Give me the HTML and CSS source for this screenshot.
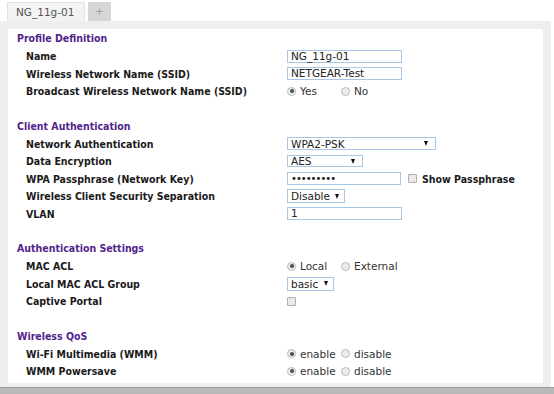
FILE: index.html
```html
<!DOCTYPE html>
<html>
<head>
<meta charset="utf-8">
<link rel="stylesheet" href="styles.css">
</head>
<body>
<div class="tabs">
  <div class="tab active">NG_11g-01</div>
  <div class="tab add">+</div>
</div>
<div class="frame">
  <div class="panel">
    <div class="section">
      <div class="head">Profile Definition</div>
      <div class="row"><div class="label">Name</div><div class="value"><span class="field">NG_11g-01</span></div></div>
      <div class="row"><div class="label">Wireless Network Name (SSID)</div><div class="value"><span class="field">NETGEAR-Test</span></div></div>
      <div class="row"><div class="label">Broadcast Wireless Network Name (SSID)</div><div class="value">
        <span class="opt"><span class="radio on"></span>Yes</span><span class="opt"><span class="radio"></span>No</span>
      </div></div>
    </div>
    <div class="section">
      <div class="head">Client Authentication</div>
      <div class="row"><div class="label">Network Authentication</div><div class="value"><span class="select w-wpa"><span>WPA2-PSK</span><span class="arrow"></span></span></div></div>
      <div class="row"><div class="label">Data Encryption</div><div class="value"><span class="select w-aes"><span>AES</span><span class="arrow"></span></span></div></div>
      <div class="row"><div class="label">WPA Passphrase (Network Key)</div><div class="value"><span class="field pass">•••••••••</span><span class="check"></span><span class="show">Show Passphrase</span></div></div>
      <div class="row"><div class="label">Wireless Client Security Separation</div><div class="value"><span class="select w-dis"><span>Disable</span><span class="arrow"></span></span></div></div>
      <div class="row"><div class="label">VLAN</div><div class="value"><span class="field">1</span></div></div>
    </div>
    <div class="section">
      <div class="head">Authentication Settings</div>
      <div class="row"><div class="label">MAC ACL</div><div class="value">
        <span class="opt"><span class="radio on"></span>Local</span><span class="opt"><span class="radio"></span>External</span>
      </div></div>
      <div class="row"><div class="label">Local MAC ACL Group</div><div class="value"><span class="select w-basic"><span>basic</span><span class="arrow"></span></span></div></div>
      <div class="row"><div class="label">Captive Portal</div><div class="value"><span class="check solo"></span></div></div>
    </div>
    <div class="section">
      <div class="head">Wireless QoS</div>
      <div class="row"><div class="label">Wi-Fi Multimedia (WMM)</div><div class="value">
        <span class="opt"><span class="radio on"></span>enable</span><span class="opt"><span class="radio"></span>disable</span>
      </div></div>
      <div class="row"><div class="label">WMM Powersave</div><div class="value">
        <span class="opt"><span class="radio on"></span>enable</span><span class="opt"><span class="radio"></span>disable</span>
      </div></div>
    </div>
  </div>
</div>
<div class="footer"></div>
</body>
</html>
```
FILE: styles.css
```css
html, body {
  margin: 0;
  padding: 0;
  background: #ffffff;
}
body {
  font-family: "DejaVu Sans", Verdana, sans-serif;
  font-size: 10.5px;
  color: #222;
  width: 554px;
  height: 394px;
  overflow: hidden;
}
.tabs {
  display: flex;
  align-items: flex-end;
  height: 21px;
  padding-left: 7px;
  gap: 3px;
}
.tab {
  height: 19px;
  line-height: 19px;
  box-sizing: border-box;
}
.tab.active {
  width: 78px;
  background: #f3f3f3;
  border: 1px solid #e2e2e2;
  border-bottom: none;
  color: #555;
  padding-left: 8px;
}
.tab.add {
  width: 23px;
  background: #d6d6d6;
  color: #a0a0a0;
  text-align: center;
}
.frame {
  background: #eeeeee;
  padding: 8px 8px 4px 8px;
  margin-right: 3px;
}
.panel {
  background: #ffffff;
  height: 354px;
  box-sizing: border-box;
  padding-top: 1px;
}
.section {
  margin-bottom: 17.5px;
}
.head {
  height: 17.5px;
  line-height: 17.5px;
  padding-left: 9px;
  font-family: "DejaVu Sans Condensed", "DejaVu Sans", sans-serif;
  font-weight: bold;
  color: #52238c;
}
.row {
  display: flex;
  align-items: center;
  height: 17.5px;
}
.label {
  width: 261px;
  padding-left: 18px;
  font-family: "DejaVu Sans Condensed", "DejaVu Sans", sans-serif;
  font-weight: bold;
  color: #1a1a1a;
  white-space: nowrap;
}
.value {
  display: flex;
  align-items: center;
  color: #333;
}
.field {
  display: block;
  box-sizing: border-box;
  width: 115px;
  height: 13px;
  border: 1px solid #a9c6e4;
  padding: 0 3px;
  line-height: 11px;
  color: #222;
  background: #fff;
  white-space: nowrap;
}
.field.pass {
  width: 114px;
  font-size: 10px;
  letter-spacing: -1px;
}
.select {
  box-sizing: border-box;
  display: inline-flex;
  align-items: center;
  justify-content: space-between;
  height: 14px;
  border: 1px solid #a9c6e4;
  padding: 0 5px 0 3px;
  background: #fff;
  color: #222;
  white-space: nowrap;
}
.w-wpa { width: 149px; height: 13px; padding-right: 7px; }
.w-aes { width: 76px; height: 12px; padding-right: 7px; }
.w-dis { width: 58px; }
.w-basic { width: 47px; }
.arrow {
  width: 0;
  height: 0;
  border-left: 2.5px solid transparent;
  border-right: 2.5px solid transparent;
  border-top: 5px solid #111;
  flex: none;
}
.opt {
  display: inline-flex;
  align-items: center;
  width: 54px;
  white-space: nowrap;
}
.radio {
  box-sizing: border-box;
  width: 9px;
  height: 9px;
  border-radius: 50%;
  border: 1px solid #b9b9b9;
  background: #ececec;
  margin-right: 4px;
  position: relative;
  flex: none;
}
.radio.on::after {
  content: "";
  position: absolute;
  left: 1.5px;
  top: 1.5px;
  width: 4px;
  height: 4px;
  border-radius: 50%;
  background: #4a4a4a;
}
.check {
  box-sizing: border-box;
  width: 9px;
  height: 9px;
  border: 1px solid #b0b0b0;
  border-radius: 1px;
  background: #e9e9e9;
  margin-left: 7px;
  margin-right: 5px;
  flex: none;
}
.check.solo {
  margin-left: 0;
}
.show {
  font-family: "DejaVu Sans Condensed", "DejaVu Sans", sans-serif;
  font-weight: bold;
  color: #1a1a1a;
}
.footer {
  height: 7px;
  box-sizing: border-box;
  background: #b9b9b9;
  border-top: 1px solid #9c9c9c;
}
```
